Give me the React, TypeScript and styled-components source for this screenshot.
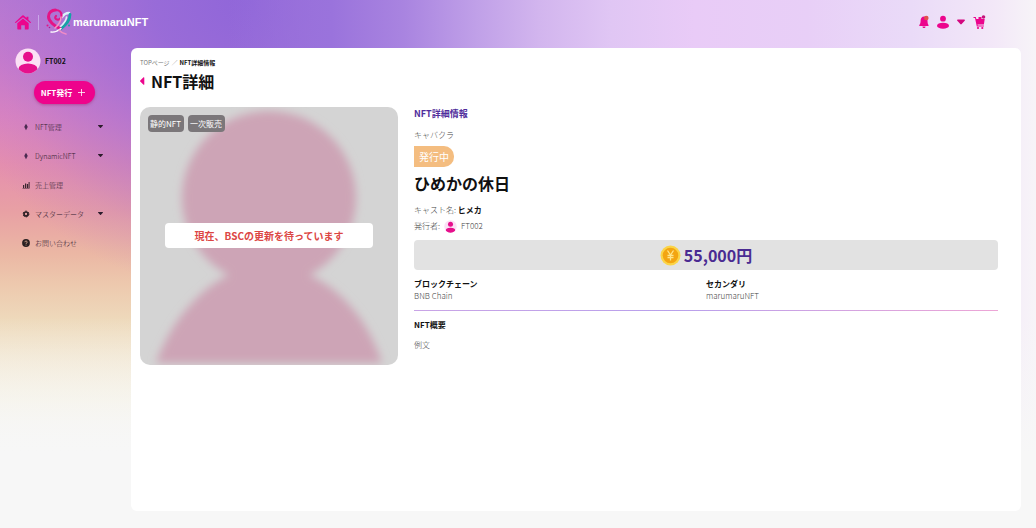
import React from "react";
import styled, { createGlobalStyle } from "styled-components";

const GlobalStyle = createGlobalStyle`
  * { box-sizing: border-box; }
  body {
    margin: 0;
    color: #111;
    font-family: "Noto Sans CJK JP", "Noto Sans", sans-serif;
    font-size: 8px;
    line-height: 12px;
  }
  h1, h2, h3, p, ul, ol, dl, dd { margin: 0; padding: 0; }
  ul, ol { list-style: none; }
  button { border: 0; padding: 0; background: none; font: inherit; color: inherit; cursor: pointer; }
  a { color: inherit; text-decoration: none; }
  svg { display: block; flex: none; }
`;

const Page = styled.div`
  min-height: 100vh;
  display: flex;
  flex-direction: column;
  background:
    linear-gradient(to bottom, #f7f7f700 60%, #f7f7f7 86%),
    linear-gradient(to right, #946cd900 22%, #9a73dc 32%, #a984e0 39%, #c0a0e8 46%, #d2b5ee 52%, #e0c6f4 59%, #e9cbf7 67%, #e8cff7 78%, #eadbf8 88%, #f3e8f8 96%, #f7f4f8 100%),
    radial-gradient(ellipse 30% 56% at 24% 0%, #9066d9 0%, #9369d9dd 30%, #a06cd888 60%, #b070d030 84%, #b870d000 100%),
    linear-gradient(to bottom, #b97ad2 0%, #cb7dcb 12%, #dc85bf 22%, #e58fae 31%, #e8a0a4 40%, #ebb7a4 48%, #edc9ae 54%, #eedabc 61%, #f2e6cf 68%, #f5f1e0 76%, #f7f7f7 86%);
`;

const Header = styled.header`
  height: 48px;
  flex: none;
  display: flex;
  align-items: center;
  justify-content: space-between;
  padding: 0 50px 4px 15px;
`;

const Brand = styled.div`
  display: flex;
  align-items: center;
  gap: 7px;
`;

const Divider = styled.span`
  width: 1px;
  height: 15px;
  background: #c9a6e8;
`;

const LogoLink = styled.a`
  display: flex;
  align-items: center;
  color: #fff;
  font: 700 11px/16px "Liberation Sans", sans-serif;
`;

const Tools = styled.nav`
  display: flex;
  align-items: center;
  gap: 8px;
`;

const Body = styled.div`
  flex: 1;
  display: flex;
  align-items: stretch;
  padding: 0 15px 17px 0;
`;

const Sidebar = styled.aside`
  width: 131px;
  flex: none;
`;

const Account = styled.div`
  display: flex;
  align-items: center;
  gap: 4px;
  height: 26px;
  padding-left: 15px;
  font-size: 7px;
  font-weight: 700;
`;

const IssueButton = styled.button`
  display: flex;
  align-items: center;
  justify-content: center;
  gap: 6px;
  width: 61px;
  height: 23px;
  margin: 7px 0 8px 34px;
  padding-right: 3px;
  border-radius: 12px;
  background: #ee038c;
  box-shadow: 0 1px 3px #a0206880;
  color: #fff;
  font-weight: 700;
`;

const MenuItem = styled.a`
  display: flex;
  align-items: center;
  gap: 4px;
  height: 29px;
  padding: 0 28px 0 21px;
  font-size: 7px;
  font-weight: 300;
  color: #33202f;
`;

const MenuLabel = styled.span`
  flex: 1;
`;

const Panel = styled.main`
  flex: 1;
  min-width: 0;
  padding: 9px 23px 24px 9px;
  border-radius: 6px;
  background: #fff;
`;

const Crumbs = styled.ol`
  display: flex;
  gap: 2px;
  font-size: 6px;
  color: #777;
`;

const Crumb = styled.li<{ $current?: boolean }>`
  font-weight: ${(p) => (p.$current ? 700 : 400)};
  color: ${(p) => (p.$current ? "#111" : "#777")};
`;

const TitleRow = styled.div`
  display: flex;
  align-items: center;
  gap: 6px;
  height: 24px;
  margin-bottom: 14px;
`;

const PageTitle = styled.h1`
  font-size: 16px;
  line-height: 24px;
  font-weight: 700;
`;

const Columns = styled.div`
  display: flex;
  align-items: flex-start;
  gap: 16px;
`;

const Artwork = styled.section`
  position: relative;
  flex: 0 0 258px;
  height: 258px;
  border-radius: 10px;
  overflow: hidden;
  background: #d4d4d4;
`;

const Tags = styled.ul`
  position: absolute;
  top: 8px;
  left: 8px;
  display: flex;
  gap: 4px;
`;

const Tag = styled.li`
  padding: 3px 3px 2px 2px;
  border-radius: 4px;
  background: #7b777a;
  color: #fff;
`;

const Notice = styled.p`
  position: absolute;
  top: 116px;
  left: 25px;
  right: 25px;
  padding: 5px 0;
  border-radius: 4px;
  background: #fff;
  color: #dc4644;
  font-size: 10px;
  line-height: 15px;
  font-weight: 700;
  text-align: center;
`;

const Details = styled.section`
  flex: 1;
  min-width: 0;
  display: flex;
  flex-direction: column;
  align-items: flex-start;
`;

const SectionTitle = styled.h2`
  font-size: 9px;
  line-height: 14px;
  font-weight: 700;
  color: #4f2d9c;
`;

const Muted = styled.p`
  font-weight: 300;
  color: #444;
`;

const Category = styled(Muted)`
  margin: 8px 0 5px;
`;

const Status = styled.span`
  padding: 3px 5px;
  border-radius: 0 10px 10px 0;
  background: #f4bd80;
  color: #fff;
  font-size: 10px;
  line-height: 15px;
`;

const ItemName = styled.h3`
  margin: 4px 0 7px;
  font-size: 16px;
  line-height: 24px;
  font-weight: 700;
`;

const Meta = styled(Muted)`
  display: flex;
  align-items: center;
  gap: 4px;
  height: 16px;
`;

const Strong = styled.strong`
  font-weight: 700;
  color: #111;
`;

const Price = styled.p`
  display: flex;
  align-items: center;
  justify-content: center;
  gap: 3px;
  width: 100%;
  height: 30px;
  margin: 6px 0 8px;
  border-radius: 4px;
  background: #e2e2e2;
  color: #4a2b92;
  font-size: 16px;
  line-height: 24px;
  font-weight: 700;
`;

const Facts = styled.dl`
  display: grid;
  grid-template-columns: 1fr 1fr;
  width: 100%;
`;

const Term = styled.dt`
  font-weight: 700;
`;

const Value = styled.dd`
  font-weight: 300;
  color: #444;
`;

const Rule = styled.div`
  width: 100%;
  height: 1px;
  margin: 8px 0;
  background: linear-gradient(to right, #c9a4e6, #b8a0ec 45%, #eda6d6);
`;

const Overview = styled.h3`
  margin-bottom: 8px;
  font-size: 8px;
  line-height: 12px;
  font-weight: 700;
`;

const PINK = "#ec058d";

const HomeIcon = () => (
  <svg width="16" height="15" viewBox="0 0 16 15" fill={PINK}>
    <path d="M7.3.6a1 1 0 0 1 1.4 0l2.8 2.5V1.8h1.900v3l2.300 2.100c.6.6-.1 1.400-.8.9L8 2.200 1.100 7.800C.4 8.300-.3 7.500.3 6.900z" />
    <path d="m8 3.500 5.700 4.700v5.300c0 .6-.4 1-1 1H9.800v-4.200H6.200v4.200H3.300c-.6 0-1-.4-1-1V8.200z" />
  </svg>
);

const HeartLogo = () => (
  <svg width="27" height="28" viewBox="0 0 27 28" fill="none" strokeLinecap="round">
    <path d="M16 9c2-3 4-4 7-4" stroke="#d9f3f8" strokeWidth="2.400" />
    <path d="M24 6.500C24 12 20 17 14.500 21" stroke="#14a3a6" strokeWidth="2.800" />
    <path d="M20.500 9c0 3-3 7-7 10.500" stroke="#d9f3f8" strokeWidth="1.600" />
    <path d="M14 20.500C8 18 2.500 13 2.500 8.500 2.500 5 5.500 2 9.500 2" stroke="#e51486" strokeWidth="3" />
    <path d="M9.500 2c4 0 6 2.500 6 5.500 0 3-2.500 4.500-4.500 4-2-.4-2.300-2.400-1-3.500" stroke="#e51486" strokeWidth="2.200" />
    <path d="M15 9c0 4-2.500 8-6 11" stroke="#f590c5" strokeWidth="1.600" />
    <path d="M5 24c4 .5 7-1 10-3.500" stroke="#fff" strokeWidth="1.400" />
    <path d="M13 22c2 2.500 4 3.500 7 4" stroke="#f08cc6" strokeWidth="1.600" />
    <circle cx="1.500" cy="17.500" r="1" fill="#e51486" />
    <circle cx="3.500" cy="19.500" r=".8" fill="#b21b8e" />
    <circle cx="23" cy="17.500" r="1" fill="#14a3a6" />
  </svg>
);

const BellIcon = () => (
  <svg width="10" height="14" viewBox="0 0 10 14" fill={PINK}>
    <path d="M5 1.500c2.500 0 3.500 1.700 3.500 4 0 2.500.3 3.500 1 4.500v1H.3v-1c.9-1 1.300-2.500 1.300-4.500 0-2.300 1.300-4 3.400-4zM3.500 11.500h3c0 1-.6 1.500-1.500 1.500s-1.500-.5-1.500-1.500z" />
    <circle cx="7.300" cy="3" r="2.300" fill="#e2504c" />
  </svg>
);

const PersonIcon = () => (
  <svg width="12" height="14" viewBox="0 0 12 14" fill={PINK}>
    <circle cx="6" cy="3.700" r="2.900" />
    <ellipse cx="6" cy="10.700" rx="6" ry="3" />
  </svg>
);

const CartIcon = () => (
  <svg width="13" height="15" viewBox="0 0 13 15" fill={PINK}>
    <path d="M.5 2h2.300l.5 2h8.400l-.8 5.500H4.500l.2 1h6.200v1H3.800L2 3H.5z" />
    <circle cx="5" cy="13" r="1.100" />
    <circle cx="9.300" cy="13" r="1.100" />
    <path d="M5.500 2h3v3h-3z" />
    <circle cx="10.500" cy="2" r="1.800" fill="#c5147c" />
  </svg>
);

const CaretDown = ({ color = "#2c1c2c", size = 5 }: { color?: string; size?: number }) => (
  <svg width={size} height={size} viewBox="0 0 8 8" fill={color}>
    <path d="M.8 1.500h6.400c.7 0 1 .7.500 1.200L4.700 6c-.4.500-1 .5-1.400 0L.3 2.700c-.5-.5-.2-1.200.5-1.200z" />
  </svg>
);

const Avatar = ({ size }: { size: number }) => (
  <svg width={size} height={size} viewBox="0 0 26 26">
    <defs>
      <clipPath id={`disc${size}`}>
        <circle cx="13" cy="13" r="12.500" />
      </clipPath>
    </defs>
    <circle cx="13" cy="13" r="12.500" fill="#fbe0f5" />
    <g fill="#e6108c" clipPath={`url(#disc${size})`}>
      <circle cx="13" cy="8.700" r="5" />
      <ellipse cx="13" cy="21" rx="9.500" ry="5.500" />
    </g>
  </svg>
);

const PlusIcon = () => (
  <svg width="7" height="7" viewBox="0 0 7 7" stroke="#fff" strokeWidth=".8">
    <path d="M3.500 0v7M0 3.500h7" />
  </svg>
);

const GemIcon = () => (
  <svg width="10" height="8" viewBox="0 0 10 8" fill="#4a2a50">
    <path d="m5 .8 1.600 2.700L5 4.400l-1.600-.9zM3.400 4.300 5 5.200l1.600-.9L5 7.300z" />
    <path d="M3.700 3h2.600v2H3.700z" />
  </svg>
);

const ChartIcon = () => (
  <svg width="10" height="8" viewBox="0 0 10 8" fill="#3a2730">
    <path d="M2 4h1.200v3H2zM4 2.500h1.200V7H4zM5.900 3h1.200v4H5.900zM7.600 1h1v6.500H1.500V7h6.100z" />
  </svg>
);

const GearIcon = () => (
  <svg width="10" height="8" viewBox="0 0 10 8">
    <circle cx="5" cy="4" r="2" fill="none" stroke="#2e2026" strokeWidth="1.700" />
    <circle cx="5" cy="4" r="2.900" fill="none" stroke="#2e2026" strokeWidth="1" strokeDasharray="1.570 1.570" />
  </svg>
);

const HelpIcon = () => (
  <svg width="10" height="8" viewBox="0 0 10 8">
    <circle cx="5" cy="4" r="3.900" fill="#2a2022" />
    <path d="M3.800 3.200c.1-1.500 2.500-1.400 2.400 0C6.200 4 5 4 5 4.900M5 5.700v.8" fill="none" stroke="#efb9a0" strokeWidth=".8" />
  </svg>
);

const BackIcon = () => (
  <svg width="5" height="8" viewBox="0 0 5 8" fill={PINK}>
    <path d="M3.500.3.300 3.400a.8.800 0 0 0 0 1.200l3.200 3.100c.4.300.8.100.8-.4V.7c0-.5-.4-.7-.8-.4z" />
  </svg>
);

const YenCoin = () => (
  <svg width="21" height="21" viewBox="0 0 21 21" fill="none">
    <circle cx="10.500" cy="10.500" r="10" fill="#fbd447" />
    <circle cx="10.500" cy="10.500" r="7.800" fill="#f3a512" />
    <path d="M7.500 5.500l3 4.500 3-4.500M10.500 10v5.500M7.500 10.500h6M7.500 12.700h6" stroke="#ffe58a" strokeWidth="1.300" />
  </svg>
);

const Silhouette = styled.svg`
  width: 100%;
  height: 100%;
`;

const menu = [
  { label: "NFT管理", icon: <GemIcon />, expandable: true },
  { label: "DynamicNFT", icon: <GemIcon />, expandable: true },
  { label: "売上管理", icon: <ChartIcon />, expandable: false },
  { label: "マスターデータ", icon: <GearIcon />, expandable: true },
  { label: "お問い合わせ", icon: <HelpIcon />, expandable: false },
];

export default function App() {
  return (
    <Page lang="ja">
      <GlobalStyle />
      <Header>
        <Brand>
          <a href="#home" aria-label="ホーム"><HomeIcon /></a>
          <Divider />
          <LogoLink href="#top"><HeartLogo />marumaruNFT</LogoLink>
        </Brand>
        <Tools>
          <button aria-label="通知"><BellIcon /></button>
          <button aria-label="アカウント"><PersonIcon /></button>
          <button aria-label="メニュー"><CaretDown color="#d3087f" size={8} /></button>
          <button aria-label="カート"><CartIcon /></button>
        </Tools>
      </Header>
      <Body>
        <Sidebar>
          <Account><Avatar size={26} />FT002</Account>
          <IssueButton>NFT発行<PlusIcon /></IssueButton>
          <nav>
            <ul>
              {menu.map((m) => (
                <li key={m.label}>
                  <MenuItem href="#menu">
                    {m.icon}
                    <MenuLabel>{m.label}</MenuLabel>
                    {m.expandable && <CaretDown />}
                  </MenuItem>
                </li>
              ))}
            </ul>
          </nav>
        </Sidebar>
        <Panel>
          <Crumbs>
            <Crumb><a href="#top">TOPページ</a></Crumb>
            <Crumb aria-hidden>／</Crumb>
            <Crumb $current>NFT詳細情報</Crumb>
          </Crumbs>
          <TitleRow>
            <button aria-label="戻る"><BackIcon /></button>
            <PageTitle>NFT詳細</PageTitle>
          </TitleRow>
          <Columns>
            <Artwork>
              <Silhouette viewBox="0 0 258 258">
                <defs>
                  <filter id="soften" x="-10%" y="-10%" width="120%" height="120%">
                    <feGaussianBlur stdDeviation="4" />
                  </filter>
                </defs>
                <g fill="#cda4b6" filter="url(#soften)">
                  <circle cx="129" cy="91" r="87" />
                  <path d="M16 256C32 212 62 178 96 165h66c36 13 66 47 80 91z" />
                </g>
              </Silhouette>
              <Tags>
                <Tag>静的NFT</Tag>
                <Tag>一次販売</Tag>
              </Tags>
              <Notice>現在、BSCの更新を待っています</Notice>
            </Artwork>
            <Details>
              <SectionTitle>NFT詳細情報</SectionTitle>
              <Category>キャバクラ</Category>
              <Status>発行中</Status>
              <ItemName>ひめかの休日</ItemName>
              <Meta as="div"><span>キャスト名: <Strong>ヒメカ</Strong></span></Meta>
              <Meta as="div">発行者: <Avatar size={13} /> FT002</Meta>
              <Price><YenCoin />55,000円</Price>
              <Facts>
                <div>
                  <Term>ブロックチェーン</Term>
                  <Value>BNB Chain</Value>
                </div>
                <div>
                  <Term>セカンダリ</Term>
                  <Value>marumaruNFT</Value>
                </div>
              </Facts>
              <Rule />
              <Overview>NFT概要</Overview>
              <Muted>例文</Muted>
            </Details>
          </Columns>
        </Panel>
      </Body>
    </Page>
  );
}
